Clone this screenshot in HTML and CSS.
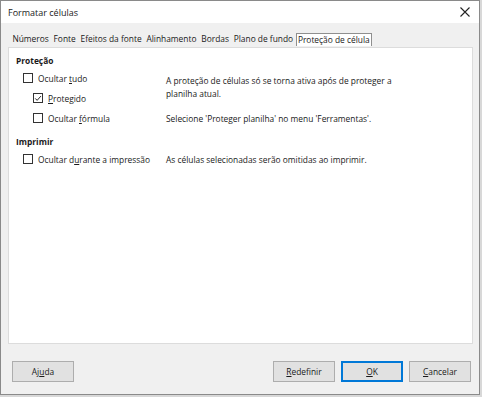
FILE: index.html
```html
<!DOCTYPE html>
<html lang="pt">
<head>
  <meta charset="UTF-8">
  <title>Formatar células</title>
  <link rel="stylesheet" href="styles.css">
</head>
<body>
  <div class="window">
    <div class="titlebar">
      <span class="title">Formatar células</span>
      <svg class="close" width="10" height="10" viewBox="0 0 10 10">
        <path d="M0.5 0.5 L9.5 9.5 M9.5 0.5 L0.5 9.5" stroke="#222" stroke-width="1.1" fill="none"/>
      </svg>
    </div>

    <div class="tabs">
      <span class="tab">Números</span>
      <span class="tab">Fonte</span>
      <span class="tab">Efeitos da fonte</span>
      <span class="tab">Alinhamento</span>
      <span class="tab">Bordas</span>
      <span class="tab">Plano de fundo</span>
      <span class="tab active">Proteção de célula</span>
    </div>

    <div class="panel">
      <div class="heading">Proteção</div>
      <div class="grid">
        <label class="check"><span class="box"></span><span>Ocultar <u>t</u>udo</span></label>
        <p class="note span2">A proteção de células só se torna ativa após de proteger a<br>planilha atual.</p>
        <label class="check sub"><span class="box">
          <svg width="9" height="9" viewBox="0 0 9 9"><path d="M1.4 4.4 L3.5 6.6 L7.8 1.8" stroke="#222" stroke-width="1.1" fill="none"/></svg>
        </span><span><u>P</u>rotegido</span></label>
        <label class="check sub"><span class="box"></span><span>Ocultar <u>f</u>órmula</span></label>
        <p class="note">Selecione 'Proteger planilha' no menu 'Ferramentas'.</p>
      </div>

      <div class="heading second">Imprimir</div>
      <div class="grid">
        <label class="check"><span class="box"></span><span>Ocultar d<u>u</u>rante a impressão</span></label>
        <p class="note">As células selecionadas serão omitidas ao imprimir.</p>
      </div>
    </div>

    <div class="buttons">
      <button class="btn">Aj<u>u</u>da</button>
      <span class="spacer"></span>
      <button class="btn"><u>R</u>edefinir</button>
      <button class="btn default"><u>O</u>K</button>
      <button class="btn"><u>C</u>ancelar</button>
    </div>
  </div>
</body>
</html>
```

FILE: styles.css
```css
:root {
  --face: #f0f0f0;
  --text: #1a1a1a;
  --line: #adadad;
}

body {
  margin: 0;
  background: #d8d8d8;
  font-family: 'Open Sans', 'Noto Sans', sans-serif;
  font-size: 8.4px;
  color: var(--text);
}

.window {
  width: 478px;
  height: 393px;
  background: var(--face);
  border: 1px solid #8a8a8a;
  display: flex;
  flex-direction: column;
}

.titlebar {
  height: 22px;
  background: #fff;
  display: flex;
  align-items: center;
  justify-content: space-between;
  padding: 0 4px 0 7px;
}

.title {
  font-size: 9px;
}

.close {
  margin-right: 5px;
}

.tabs {
  display: flex;
  align-items: flex-end;
  height: 24px;
  padding-left: 9px;
  box-sizing: border-box;
}

.tab {
  padding: 0 1.4px;
  line-height: 12px;
  margin-bottom: 1px;
  border: 1px solid transparent;
  white-space: nowrap;
}

.active {
  background: #fff;
  border-color: #8f8f8f;
  border-bottom: none;
}

.panel {
  height: 289px;
  margin: 0 6px 0 7px;
  background: #fff;
  border: 1px solid #dcdcdc;
  padding: 6px 0 0 7px;
}

.heading {
  font-weight: bold;
  line-height: 14px;
}

.second {
  margin-top: 7px;
}

.grid {
  display: grid;
  grid-template-columns: 150px 1fr;
  grid-auto-rows: 20px;
  align-items: center;
}

.check {
  display: flex;
  align-items: center;
  gap: 5px;
  padding-left: 7px;
  white-space: nowrap;
}

.check.sub {
  padding-left: 17px;
}

.box {
  width: 8px;
  height: 8px;
  border: 1px solid #333;
  background: #fff;
  display: flex;
  align-items: center;
  justify-content: center;
}

.box svg {
  display: block;
}

.note {
  margin: 0;
  line-height: 13px;
  white-space: nowrap;
}

.span2 {
  grid-row: span 2;
  align-self: start;
  padding-top: 6px;
}

.buttons {
  display: flex;
  gap: 6px;
  padding: 17px 8px 0 11px;
}

.spacer {
  flex: 1;
}

.btn {
  width: 62px;
  height: 21px;
  background: #e1e1e1;
  border: 1px solid var(--line);
  font-family: inherit;
  font-size: 8.4px;
  color: var(--text);
  padding: 0;
}

.default {
  border: 1px solid #0078d7;
  box-shadow: inset 0 0 0 1px #0078d7;
}
```
